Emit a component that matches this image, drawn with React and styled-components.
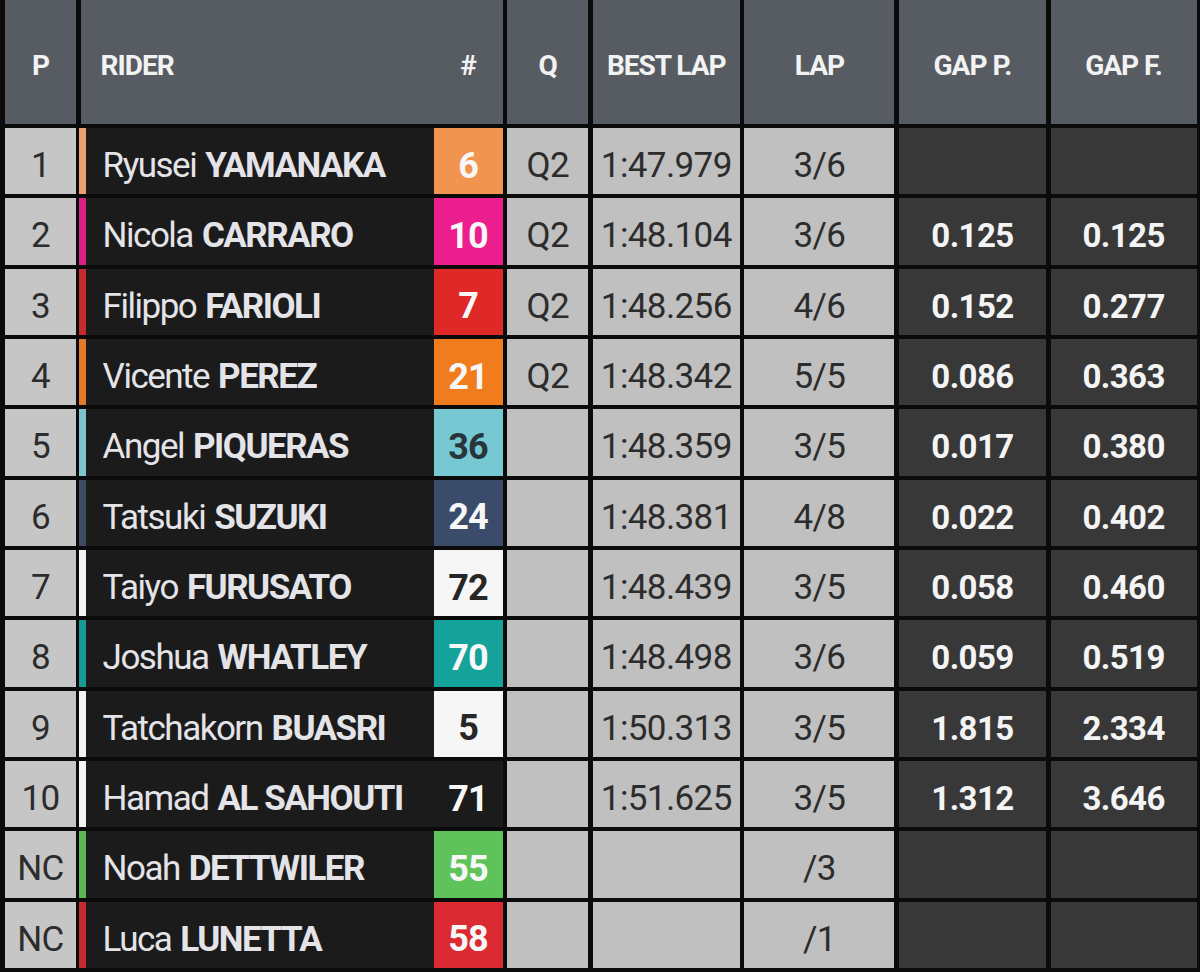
import styled, { createGlobalStyle } from "styled-components";

const GlobalStyle = createGlobalStyle`
  html, body {
    margin: 0;
    padding: 0;
    background: #0b0b0b;
  }
  body {
    font-family: "Roboto", "Liberation Sans", sans-serif;
  }
`;

const COLUMNS = "71px 422px 81px 147px 150px 147px 146px";

// whole timing board
const Board = styled.div`
  display: flex;
  flex-direction: column;
  gap: 4px;
  height: 972px;
  padding: 0 3px 4px 5px;
  box-sizing: border-box;
  overflow: hidden;
`;

const HeaderRow = styled.div`
  display: grid;
  grid-template-columns: ${COLUMNS};
  column-gap: 4.6px;
  height: 124px;
  flex: none;
`;

const HeadCell = styled.div`
  background: #575c63;
  color: #f2f2f2;
  font-size: 28px;
  font-weight: 700;
  letter-spacing: -1px;
  display: flex;
  align-items: center;
  justify-content: ${(p) => (p.$left ? "space-between" : "center")};
  padding: ${(p) => (p.$left ? "6px 0 0 20px" : "6px 0 0")};
  grid-column: ${(p) => (p.$span ? `span ${p.$span}` : "auto")};
`;

const HashMark = styled.span`
  width: 69px;
  text-align: center;
`;

// one rider line
const Line = styled.div`
  display: grid;
  grid-template-columns: ${COLUMNS};
  column-gap: 4.6px;
  flex: 1;
`;

const LightCell = styled.div`
  background: ${(p) => (p.$pos ? "#c6c6c6" : "#c0c0c0")};
  color: #2c2c2c;
  font-size: 35px;
  letter-spacing: -0.6px;
  display: flex;
  align-items: center;
  justify-content: center;
  padding-top: 9px;
`;

const GapCell = styled.div`
  background: #383838;
  color: #f4f4f4;
  font-size: 33px;
  font-weight: 700;
  letter-spacing: -0.6px;
  display: flex;
  align-items: center;
  justify-content: center;
  padding-top: 9px;
`;

const RiderCell = styled.div`
  display: flex;
  background: #1b1b1c;
  border-left: 7px solid ${(p) => p.$stripe};
  margin-left: -2px;
`;

const Name = styled.div`
  flex: 1;
  display: flex;
  align-items: center;
  padding: 9px 0 0 17px;
  color: #e4e4e8;
  font-size: 35px;
  letter-spacing: -1.5px;
  white-space: nowrap;

  b {
    font-weight: 700;
    margin-left: 9px;
  }
`;

const NumberBox = styled.div`
  width: 69px;
  flex: none;
  background: ${(p) => p.$bg};
  color: ${(p) => p.$fg};
  font-size: 36px;
  font-weight: 700;
  letter-spacing: -0.8px;
  display: flex;
  align-items: center;
  justify-content: center;
  padding-top: 9px;
`;

const riders = [
  { pos: "1", first: "Ryusei", last: "YAMANAKA", num: "6", bg: "#f0944f", stripe: "#e9a173", q: "Q2", best: "1:47.979", lap: "3/6", gapP: "", gapF: "" },
  { pos: "2", first: "Nicola", last: "CARRARO", num: "10", bg: "#ec1d8c", stripe: "#d81f82", q: "Q2", best: "1:48.104", lap: "3/6", gapP: "0.125", gapF: "0.125" },
  { pos: "3", first: "Filippo", last: "FARIOLI", num: "7", bg: "#df2828", stripe: "#c62a2a", q: "Q2", best: "1:48.256", lap: "4/6", gapP: "0.152", gapF: "0.277" },
  { pos: "4", first: "Vicente", last: "PEREZ", num: "21", bg: "#f07c1e", stripe: "#e47a28", q: "Q2", best: "1:48.342", lap: "5/5", gapP: "0.086", gapF: "0.363" },
  { pos: "5", first: "Angel", last: "PIQUERAS", num: "36", bg: "#76c9d3", fg: "#26363a", stripe: "#7cc5cf", q: "", best: "1:48.359", lap: "3/5", gapP: "0.017", gapF: "0.380" },
  { pos: "6", first: "Tatsuki", last: "SUZUKI", num: "24", bg: "#3b4c6b", stripe: "#3d4a60", q: "", best: "1:48.381", lap: "4/8", gapP: "0.022", gapF: "0.402" },
  { pos: "7", first: "Taiyo", last: "FURUSATO", num: "72", bg: "#f6f6f6", fg: "#262626", stripe: "#f4f4f4", q: "", best: "1:48.439", lap: "3/5", gapP: "0.058", gapF: "0.460" },
  { pos: "8", first: "Joshua", last: "WHATLEY", num: "70", bg: "#15a29b", stripe: "#169a93", q: "", best: "1:48.498", lap: "3/6", gapP: "0.059", gapF: "0.519" },
  { pos: "9", first: "Tatchakorn", last: "BUASRI", num: "5", bg: "#f6f6f6", fg: "#262626", stripe: "#f4f4f4", q: "", best: "1:50.313", lap: "3/5", gapP: "1.815", gapF: "2.334" },
  { pos: "10", first: "Hamad", last: "AL SAHOUTI", num: "71", bg: "#1b1b1c", stripe: "#f4f4f4", q: "", best: "1:51.625", lap: "3/5", gapP: "1.312", gapF: "3.646" },
  { pos: "NC", first: "Noah", last: "DETTWILER", num: "55", bg: "#5fc35b", stripe: "#5cb857", q: "", best: "", lap: "/3", gapP: "", gapF: "" },
  { pos: "NC", first: "Luca", last: "LUNETTA", num: "58", bg: "#dc2a32", stripe: "#c82a32", q: "", best: "", lap: "/1", gapP: "", gapF: "" },
];

export default function App() {
  return (
    <>
      <GlobalStyle />
      <Board>
        <HeaderRow>
          <HeadCell>P</HeadCell>
          <HeadCell $left>
            RIDER
            <HashMark>#</HashMark>
          </HeadCell>
          <HeadCell>Q</HeadCell>
          <HeadCell>BEST LAP</HeadCell>
          <HeadCell>LAP</HeadCell>
          <HeadCell>GAP P.</HeadCell>
          <HeadCell>GAP F.</HeadCell>
        </HeaderRow>

        {riders.map((r) => (
          <Line key={r.num}>
            <LightCell $pos>{r.pos}</LightCell>
            <RiderCell $stripe={r.stripe}>
              <Name>
                {r.first}
                <b>{r.last}</b>
              </Name>
              <NumberBox $bg={r.bg} $fg={r.fg || "#f7f7f7"}>
                {r.num}
              </NumberBox>
            </RiderCell>
            <LightCell>{r.q}</LightCell>
            <LightCell>{r.best}</LightCell>
            <LightCell>{r.lap}</LightCell>
            <GapCell>{r.gapP}</GapCell>
            <GapCell>{r.gapF}</GapCell>
          </Line>
        ))}
      </Board>
    </>
  );
}
